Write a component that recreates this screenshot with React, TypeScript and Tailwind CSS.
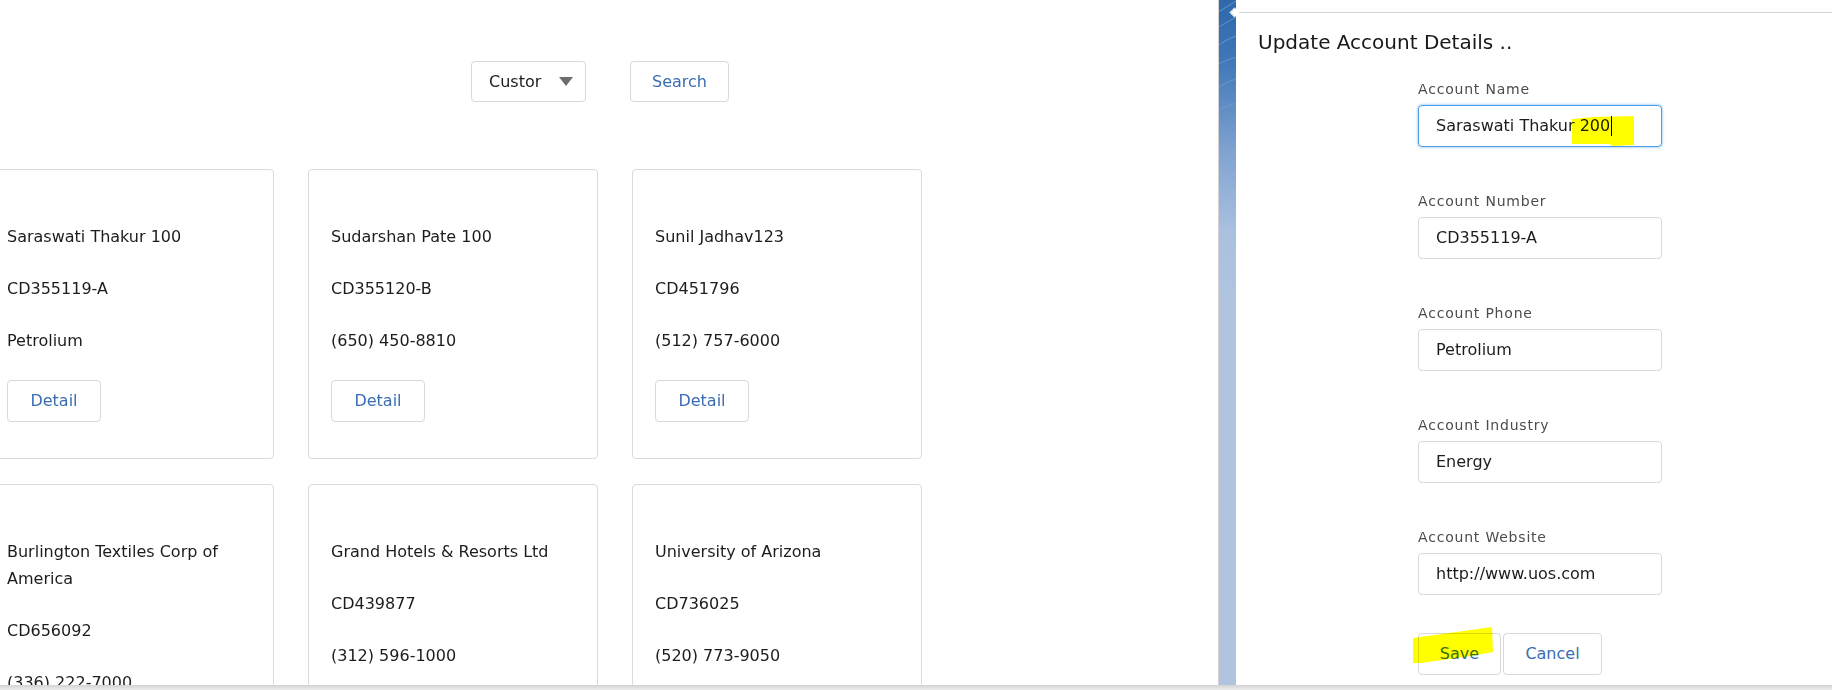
import React from 'react';

type Account = {
  name: string;
  number: string;
  phone: string;
  detail?: boolean;
};

const accounts: Account[] = [
  { name: 'Saraswati Thakur 100', number: 'CD355119-A', phone: 'Petrolium', detail: true },
  { name: 'Sudarshan Pate 100', number: 'CD355120-B', phone: '(650) 450-8810', detail: true },
  { name: 'Sunil Jadhav123', number: 'CD451796', phone: '(512) 757-6000', detail: true },
  { name: 'Burlington Textiles Corp of America', number: 'CD656092', phone: '(336) 222-7000', detail: true },
  { name: 'Grand Hotels & Resorts Ltd', number: 'CD439877', phone: '(312) 596-1000', detail: true },
  { name: 'University of Arizona', number: 'CD736025', phone: '(520) 773-9050', detail: true },
];

const fields = [
  { label: 'Account Number', value: 'CD355119-A' },
  { label: 'Account Phone', value: 'Petrolium' },
  { label: 'Account Industry', value: 'Energy' },
  { label: 'Account Website', value: 'http://www.uos.com' },
];

const AccountCard: React.FC<{ account: Account }> = ({ account }) => (
  <div className="flex flex-col items-start rounded-[4px] border border-[#dadada] bg-white px-[22px] pb-[36px] pt-[53px]">
    <p className="leading-[27px]">{account.name}</p>
    <p className="mt-[25px] leading-[27px]">{account.number}</p>
    <p className="mt-[25px] leading-[27px]">{account.phone}</p>
    {account.detail && (
      <button className="mt-[26px] h-[42px] w-[94px] rounded-[4px] border border-[#d8d8d8] bg-white text-[#3b6db3]">
        Detail
      </button>
    )}
  </div>
);

// swirl pattern on the top of the side strip
const StripPattern = () => (
  <svg width="18" height="140" viewBox="0 0 18 140" className="block" fill="none">
    <path d="M-4 14 C 6 8, 12 4, 22 -2" stroke="white" strokeOpacity="0.35" strokeWidth="0.8" />
    <path d="M-4 30 C 4 24, 12 20, 22 14" stroke="white" strokeOpacity="0.3" strokeWidth="0.8" />
    <path d="M-4 48 C 6 40, 12 38, 22 34" stroke="white" strokeOpacity="0.3" strokeWidth="0.8" />
    <path d="M-4 66 C 6 60, 14 58, 22 56" stroke="white" strokeOpacity="0.25" strokeWidth="0.8" />
    <path d="M-4 90 C 6 82, 14 80, 22 78" stroke="white" strokeOpacity="0.2" strokeWidth="0.8" />
    <path d="M-4 112 C 6 106, 14 104, 22 102" stroke="white" strokeOpacity="0.15" strokeWidth="0.8" />
  </svg>
);

export default function App() {
  return (
    <div className="relative flex h-[690px] w-[1832px] overflow-hidden bg-white font-['DejaVu_Sans',sans-serif] text-[16px] text-[#1c1c1c]">
      {/* Account list */}
      <div className="w-[1218px] shrink-0 overflow-hidden">
        <div className="flex gap-[44px] pl-[471px] pt-[61px]">
          <div className="flex h-[41px] w-[115px] items-center justify-between rounded-[4px] border border-[#d8d8d8] pl-[17px] pr-[12px]">
            <span>Custor</span>
            <svg width="14" height="9" viewBox="0 0 14 9">
              <path d="M0 0 H14 L7 9 Z" fill="#6f6d6a" />
            </svg>
          </div>
          <button className="h-[41px] w-[99px] rounded-[4px] border border-[#d8d8d8] bg-white text-[#3b6db3]">
            Search
          </button>
        </div>

        <div className="ml-[-16px] mt-[67px] grid grid-cols-[repeat(3,290px)] gap-x-[34px] gap-y-[25px]">
          {accounts.map((a) => (
            <AccountCard key={a.number} account={a} />
          ))}
        </div>
      </div>

      {/* Side strip */}
      <div className="w-[18px] shrink-0 border-l border-[#d6d0d0] bg-[linear-gradient(to_bottom,#2d68ad_0px,#3f77b8_60px,#7fa2d0_150px,#a9c0df_230px,#b0c4df_300px,#b0c4df_100%)]">
        <StripPattern />
      </div>

      {/* Update panel */}
      <div className="relative flex-1">
        <div className="h-[12px]" />
        <div className="relative border-t border-[#d4d4d4]">
          <span className="absolute left-[-5px] top-[-4px] h-[7px] w-[7px] rotate-45 border-b border-l border-[#d4d4d4] bg-white" />
        </div>
        <h2 className="pl-[22px] pt-[15px] text-[20px] leading-[28px] text-[#181818]">Update Account Details ..</h2>

        <div className="ml-[182px] mt-[23px] w-[244px]">
          <label className="block text-[14px] leading-[20px] tracking-[0.8px] text-[#4c4c4c]">Account Name</label>
          <div className="relative mt-[6px] flex h-[42px] items-center rounded-[4px] border border-[#4b9ce6] pl-[17px] shadow-[0_0_3px_#6fb3f0]">
            <span>Saraswati Thakur 200</span>
            <span className="ml-[1px] h-[20px] w-px bg-black" />
            <svg width="62" height="30" viewBox="0 0 62 30" className="absolute left-[153px] top-[10px] mix-blend-multiply">
              <path d="M0 3 L22 1 L62 0 L62 29 L40 30 L38 28 L0 28 Z" fill="#ffff00" />
            </svg>
          </div>

          {fields.map((f) => (
            <div key={f.label} className="mt-[44px]">
              <label className="block text-[14px] leading-[20px] tracking-[0.8px] text-[#4c4c4c]">{f.label}</label>
              <div className="mt-[6px] flex h-[42px] items-center rounded-[4px] border border-[#d8d8d8] pl-[17px]">
                {f.value}
              </div>
            </div>
          ))}

          <div className="relative mt-[38px] flex gap-[2px]">
            <button className="h-[42px] w-[83px] rounded-[4px] border border-[#d8d8d8] bg-white text-[#3b6db3]">Save</button>
            <button className="h-[42px] w-[99px] rounded-[4px] border border-[#d8d8d8] bg-white text-[#3b6db3]">Cancel</button>
            <svg width="81" height="37" viewBox="0 0 81 37" className="absolute left-[-5px] top-[-6px] mix-blend-multiply">
              <path d="M0 11 L79 0 L80 25 L58 29 L8 36 L0 36 Z" fill="#ffff00" />
            </svg>
          </div>
        </div>
      </div>

      {/* bottom edge of the window */}
      <div className="absolute inset-x-0 bottom-0 h-[5px] bg-gradient-to-b from-[#d2d2d2] to-[#eeeeee]" />
    </div>
  );
}
